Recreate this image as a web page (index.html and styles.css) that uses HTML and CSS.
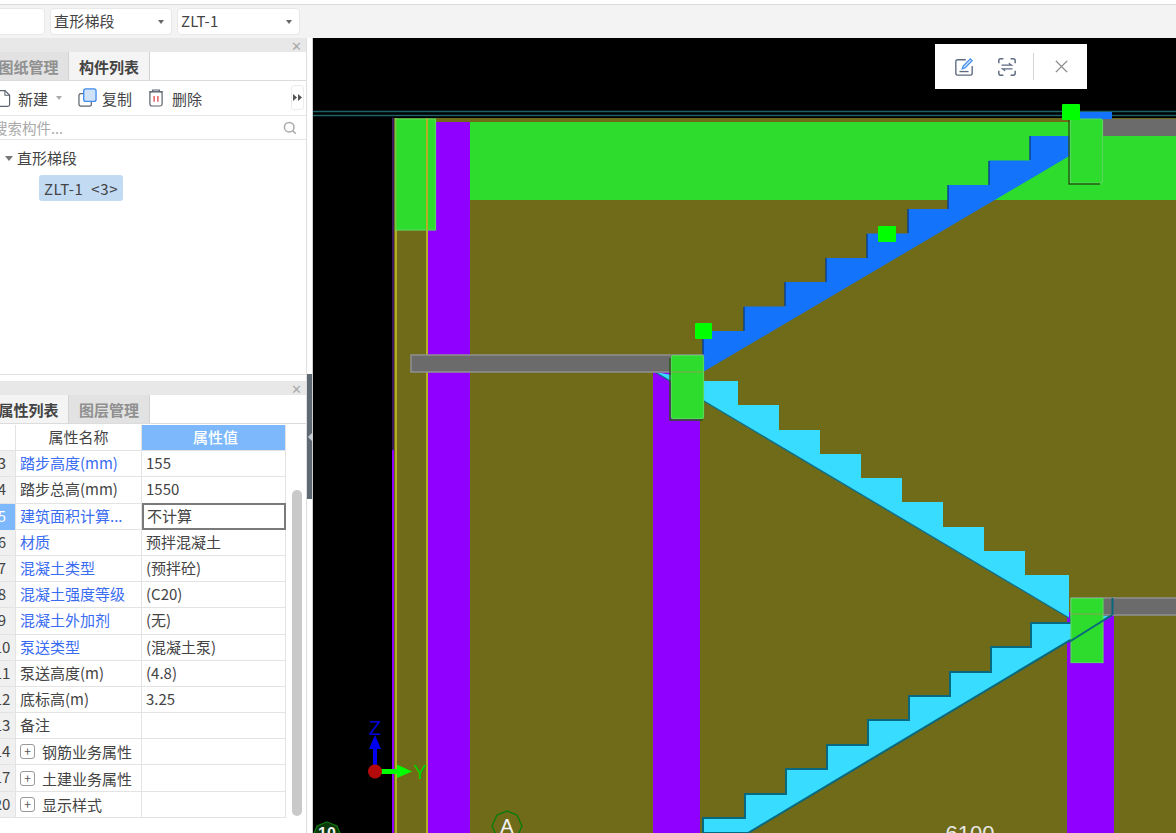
FILE: index.html
```html
<!DOCTYPE html>
<html lang="zh-CN">
<head>
<meta charset="utf-8">
<title>直形梯段</title>
<link rel="stylesheet" href="styles.css">
</head>
<body>
<div class="app">
  <header class="topbar">
    <div class="select select-a"><span class="caret"></span></div>
    <div class="select select-b"><span class="select-text">直形梯段</span><span class="caret"></span></div>
    <div class="select select-c"><span class="select-text">ZLT-1</span><span class="caret"></span></div>
  </header>
  <main class="main">
    <aside class="sidebar">
      <section class="panel panel-list">
        <div class="panel-head"><span class="panel-x">✕</span></div>
        <div class="tabs">
          <div class="tab">图纸管理</div>
          <div class="tab active">构件列表</div>
        </div>
        <div class="tools">
          <svg class="ic ic-doc" viewBox="0 0 16 20"><path d="M2.5 1.500h7l5 5v10a2 2 0 0 1-2 2h-10a2 2 0 0 1-2-2v-13a2 2 0 0 1 2-2z" fill="#fff" stroke="#5c6470" stroke-width="1.3"/><path d="M9.500 1.500v5h5" fill="none" stroke="#5c6470" stroke-width="1.1"/></svg>
          <span class="tool-label">新建</span>
          <span class="tool-caret"></span>
          <svg class="ic ic-copy" viewBox="0 0 20 20"><rect x="1" y="6" width="13" height="13" rx="2" fill="#fff" stroke="#5c6470" stroke-width="1.3"/><rect x="6" y="1" width="13" height="13" rx="2" fill="#cfe2f8" stroke="#3f8cf0" stroke-width="1.4"/></svg>
          <span class="tool-label">复制</span>
          <svg class="ic ic-trash" viewBox="0 0 17 20"><path d="M5 3V1.500h7V3M1 3.500h15" fill="none" stroke="#5c6470" stroke-width="1.3"/><rect x="2" y="3.500" width="13" height="15" rx="2" fill="#fff" stroke="#5c6470" stroke-width="1.3"/><path d="M6.500 8v6M10.500 8v6" stroke="#e0474c" stroke-width="1.4"/></svg>
          <span class="tool-label">删除</span>
          <span class="more"><svg class="more-ic" viewBox="0 0 9 7"><path d="M0 0l4 3.500L0 7zM5 0l4 3.500L5 7z" fill="#555"/></svg></span>
        </div>
        <div class="search">
          <span class="search-text">搜索构件...</span>
          <svg class="ic-search" viewBox="0 0 14 14"><circle cx="6.200" cy="6.200" r="4.800" fill="none" stroke="#a9a9a9" stroke-width="1.500"/><path d="M9.800 9.800l3 3" stroke="#a9a9a9" stroke-width="1.500"/></svg>
        </div>
        <div class="tree">
          <div class="tree-root"><span class="tree-caret"></span>直形梯段</div>
          <div class="tree-item">ZLT-1&nbsp;&nbsp;&lt;3&gt;</div>
        </div>
      </section>
      <section class="panel panel-props">
        <div class="panel-head"><span class="panel-x">✕</span></div>
        <div class="tabs">
          <div class="tab active">属性列表</div>
          <div class="tab">图层管理</div>
        </div>
        <div class="grid-wrap">
          <div class="grid">
            <div class="row head"><div class="idx plain"></div><div class="name">属性名称</div><div class="val">属性值</div></div>
            <div class="row"><div class="idx">3</div><div class="name link">踏步高度(mm)</div><div class="val">155</div></div>
            <div class="row"><div class="idx">4</div><div class="name">踏步总高(mm)</div><div class="val">1550</div></div>
            <div class="row current"><div class="idx">5</div><div class="name link">建筑面积计算...</div><div class="val">不计算</div></div>
            <div class="row"><div class="idx">6</div><div class="name link">材质</div><div class="val">预拌混凝土</div></div>
            <div class="row"><div class="idx">7</div><div class="name link">混凝土类型</div><div class="val">(预拌砼)</div></div>
            <div class="row"><div class="idx">8</div><div class="name link">混凝土强度等级</div><div class="val">(C20)</div></div>
            <div class="row"><div class="idx">9</div><div class="name link">混凝土外加剂</div><div class="val">(无)</div></div>
            <div class="row"><div class="idx">10</div><div class="name link">泵送类型</div><div class="val">(混凝土泵)</div></div>
            <div class="row"><div class="idx">11</div><div class="name">泵送高度(m)</div><div class="val">(4.8)</div></div>
            <div class="row"><div class="idx">12</div><div class="name">底标高(m)</div><div class="val">3.25</div></div>
            <div class="row"><div class="idx">13</div><div class="name">备注</div><div class="val"></div></div>
            <div class="row"><div class="idx">14</div><div class="name group"><span class="plus">+</span>钢筋业务属性</div><div class="val"></div></div>
            <div class="row"><div class="idx">17</div><div class="name group"><span class="plus">+</span>土建业务属性</div><div class="val"></div></div>
            <div class="row"><div class="idx">20</div><div class="name group"><span class="plus">+</span>显示样式</div><div class="val"></div></div>
          </div>
          <div class="scroll"><div class="thumb"></div></div>
        </div>
      </section>
    </aside>
    <div class="splitter"><span class="split-handle"><span class="split-arrow"></span></span></div>
    <div class="canvas">
      <svg class="drawing" viewBox="312 38 864 795" preserveAspectRatio="xMinYMin slice">
        <rect x="312" y="38" width="864" height="795" fill="#000"/>
        <rect x="394" y="118" width="782" height="715" fill="#6f6b18"/>
        <rect x="470" y="122" width="706" height="78" fill="#2ddc2d"/>
        <rect x="392" y="118" width="2" height="332" fill="#3a1a5c"/>
        <rect x="392" y="450" width="2" height="383" fill="#8f00ff"/>
        <rect x="428" y="122" width="42" height="711" fill="#8f00ff"/>
        <path d="M396 118V833M427 118V833" stroke="#b5ae22" stroke-width="2" fill="none"/>
        <path d="M312 111.500H1176M312 115.500H1176" stroke="#1f6069" stroke-width="1.400" fill="none"/>
        <rect x="653" y="372" width="47" height="461" fill="#8f00ff"/>
        <rect x="1067" y="612" width="47" height="221" fill="#8f00ff"/>
        <rect x="1080" y="112" width="32" height="8" fill="#1473fb"/>
        <polygon points="703,372 703,331 744,331 744,306.500 785,306.500 785,282 826,282 826,258 867,258 867,233.500 908,233.500 908,209 948,209 948,185 989,185 989,160.500 1030,160.500 1030,136 1071,136 1071,155" fill="#1473fb"/>
        <path d="M703 331V355M744 307V331M785 282V306M826 258V282M867 234V258M908 209V233M948 185V209M989 161V185M1030 136V160" stroke="#0b3f8c" stroke-width="1.400" fill="none"/>
        <polygon points="655,372 705,381 738,381 738,405 779,405 779,430 820,430 820,454 861,454 861,478 902,478 902,502 943,502 943,527 984,527 984,551 1025,551 1025,575 1069,575 1069,618" fill="#38dcff"/>
        <path d="M655 372L1069 618" stroke="#0e6f8a" stroke-width="1.400" fill="none"/>
        <polygon points="703,833 703,818 745,818 745,794 786,794 786,769 827,769 827,745 868,745 868,720 909,720 909,696 950,696 950,672 991,672 991,647 1031,647 1031,623 1071,623 1071,615 1112,615 748,833" fill="#38dcff" stroke="#08687f" stroke-width="2"/>
        <g fill="#6b6b6b" stroke="#909090" stroke-width="1.500">
          <rect x="411" y="355" width="292" height="17"/>
          <rect x="1071" y="598" width="110" height="17"/>
          <rect x="1103" y="119" width="80" height="17" stroke="none"/>
        </g>
        <g fill="#2ddc2d" stroke="#57d85a" stroke-width="1.200">
          <rect x="395.500" y="119" width="40" height="111"/>
          <rect x="671.500" y="355.500" width="32" height="63" rx="2"/>
          <rect x="1071" y="598.500" width="32" height="64"/>
          <rect x="1070.500" y="119" width="32" height="64" rx="2"/>
        </g>
        <path d="M670 358V420H703M1069 119V184H1100" stroke="#2a5a14" stroke-width="1.400" fill="none"/>
        <path d="M671 372H703M1071 614H1103" stroke="#8da052" stroke-width="1" fill="none"/>
        <path d="M1069 642L1112 615M1112.500 598V615" stroke="#08687f" stroke-width="2" fill="none"/>
        <path d="M427 119V230" stroke="#b5ae22" stroke-width="2" fill="none"/>
        <path d="M396 119V230" stroke="#b5ae22" stroke-width="1.500" opacity=".35" fill="none"/>
        <g fill="#00ff00">
          <rect x="1062" y="104" width="18" height="16" rx="1"/>
          <rect x="878" y="226" width="18" height="16" rx="1"/>
          <rect x="695" y="323" width="17" height="16" rx="1"/>
        </g>
        <path d="M312.500 38V833" stroke="#cfcfcf" stroke-width="1" fill="none"/>
        <rect x="373" y="747" width="4" height="20" fill="#0000f0"/>
        <polygon points="375,735 381,749 369,749" fill="#0000f0"/>
        <rect x="380" y="769" width="18" height="5" fill="#00ff00"/>
        <polygon points="412,771.500 397,764.500 397,778" fill="#00ff00"/>
        <circle cx="375" cy="771.500" r="7" fill="#b50a0a"/>
        <text class="axis axis-z" x="375" y="735" text-anchor="middle">Z</text>
        <text class="axis axis-y" x="420" y="779" text-anchor="middle">Y</text>
        <polygon points="507,811 517,815 522,826 517,837 507,841 497,837 492,826 497,815" fill="none" stroke="#0d7a0d" stroke-width="1.400"/>
        <text class="grid-label" x="507" y="833" text-anchor="middle">A</text>
        <polygon points="327,822 337,826 341,836 313,836 317,826" fill="#0a3a0a" stroke="#0d7a0d" stroke-width="1.200"/>
        <text class="grid-label small" x="327" y="839" text-anchor="middle">10</text>
        <text class="grid-label dim" x="970" y="841" text-anchor="middle">6100</text>
      </svg>
      <div class="float-bar">
        <svg class="fb-ic" viewBox="0 0 22 22"><path d="M13 3H4a2 2 0 0 0-2 2v13a2 2 0 0 0 2 2h14a2 2 0 0 0 2-2V10" fill="none" stroke="#5f6b80" stroke-width="1.500"/><path d="M6 16h10" stroke="#5f6b80" stroke-width="1.500"/><path d="M9 13l1-3 8-8 2 2-8 8z" fill="#cfe2f8" stroke="#3f8cf0" stroke-width="1.300"/></svg>
        <svg class="fb-ic" viewBox="0 0 22 22"><path d="M2 7V4a2 2 0 0 1 2-2h3M15 2h3a2 2 0 0 1 2 2v3M20 15v3a2 2 0 0 1-2 2h-3M7 20H4a2 2 0 0 1-2-2v-3" fill="none" stroke="#5f6b80" stroke-width="1.600"/><path d="M5 9h11l-3-2M17 13H6l3 2" fill="none" stroke="#5f6b80" stroke-width="1.300"/></svg>
        <span class="fb-sep"></span>
        <svg class="fb-ic fb-close" viewBox="0 0 16 16"><path d="M2 2l12 12M14 2L2 14" stroke="#8a8a8a" stroke-width="1.500" fill="none"/></svg>
      </div>
    </div>
  </main>
</div>
</body>
</html>
```
FILE: styles.css
```css
* { box-sizing: border-box; }
html, body { margin: 0; height: 100%; overflow: hidden; }
body {
  font-family: "Noto Sans CJK SC", "Noto Sans", sans-serif;
  font-size: 15px;
  color: #444;
  background: #fff;
}
.app { width: 1176px; height: 833px; display: flex; flex-direction: column; overflow: hidden; }

.topbar {
  height: 34px;
  flex: none;
  margin-top: 4px;
  margin-left: -10px;
  border-top: 1px solid #dcdcdc;
  background: #f3f3f3;
  display: flex;
  gap: 5px;
  padding-top: 3px;
}
.select {
  height: 27px;
  background: #fff;
  border: 1px solid #e8e8e8;
  border-radius: 4px;
  display: flex;
  align-items: center;
  justify-content: space-between;
  padding: 0 7px 0 3px;
  line-height: 1;
}
.select-text { margin-top: -3px; letter-spacing: .2px; }
.select-a { width: 55px; }
.select-b { width: 122px; }
.select-c { width: 123px; }
.caret {
  width: 0; height: 0;
  border-left: 3.5px solid transparent;
  border-right: 3.5px solid transparent;
  border-top: 4px solid #666;
}

.main { flex: 1; display: flex; min-height: 0; }
.sidebar { width: 307px; flex: none; display: flex; flex-direction: column; border-right: 1px solid #dedede; overflow: hidden; }
.splitter { width: 5px; flex: none; background: #fff; padding-top: 336px; }
.split-handle { display: flex; align-items: center; justify-content: center; height: 125px; background: #5f6973; }
.split-arrow {
  width: 0; height: 0;
  border-top: 4px solid transparent;
  border-bottom: 4px solid transparent;
  border-right: 4px solid #c9ced3;
}

.panel { display: flex; flex-direction: column; margin-left: -11px; }
.panel-list { height: 337px; border-bottom: 1px solid #e2e2e2; }
.panel-props { flex: 1; padding-top: 6px; min-height: 0; }
.panel-head {
  height: 14px; flex: none;
  background: #e8e8e8;
  display: flex; justify-content: flex-end; align-items: center;
  padding-right: 4px;
}
.panel-x { font-size: 13px; line-height: 1; color: #aaa; }

.tabs { height: 29px; flex: none; display: flex; border-bottom: 1px solid #dcdcdc; background: #fff; }
.tab {
  width: 80px;
  display: flex; align-items: center; justify-content: center;
  background: #e2e2e2; color: #909090;
  font-weight: 700; font-size: 15px;
  border-right: 1px solid #cfd3d6;
}
.tab.active { background: #f4f4f4; color: #444; }
.tab:nth-child(2) { width: 81px; }

.tools {
  height: 35px; flex: none;
  display: flex; align-items: center;
  border-bottom: 1px solid #e8e8e8;
  padding-left: 9px;
  position: relative;
}
.ic { flex: none; }
.ic-doc { width: 15px; height: 19px; margin-left: -2px; }
.ic-copy { width: 19px; height: 19px; margin-top: -2px; }
.ic-trash { width: 16px; height: 20px; }
.tool-label { line-height: 1; }
.ic-doc + .tool-label { margin-left: 7px; }
.tool-caret {
  margin: 0 16px 0 8px;
  border-left: 3.5px solid transparent;
  border-right: 3.5px solid transparent;
  border-top: 4px solid #aaa;
}
.ic-copy + .tool-label { margin-left: 5px; margin-right: 16px; }
.ic-trash + .tool-label { margin-left: 8px; }
.more {
  position: absolute; left: 302px; top: 4px;
  width: 13px; height: 25px;
  border: 1px solid #ececec; border-radius: 3px;
  display: flex; align-items: center; justify-content: center;
}
.more-ic { width: 9px; height: 7px; }

.search {
  height: 24px; flex: none;
  display: flex; align-items: center; justify-content: space-between;
  padding: 0 9px 0 4px;
  border-bottom: 1px solid #e4e4e4;
  color: #aaa;
  font-size: 14.5px;
}
.ic-search { width: 14px; height: 14px; }

.tree { flex: 1; padding: 5px 0 0 16px; }
.tree-root { height: 24px; display: flex; align-items: center; line-height: 1; }
.tree-caret {
  width: 0; height: 0; margin: 2px 4px 0 0;
  border-left: 4px solid transparent;
  border-right: 4px solid transparent;
  border-top: 5px solid #777;
}
.tree-item {
  width: 84px; height: 26px; margin: 6px 0 0 34px;
  background: #c2daf2; border-radius: 3px;
  display: flex; align-items: center; justify-content: center;
  line-height: 1; white-space: nowrap; letter-spacing: .6px;
}

.grid-wrap { flex: 1; display: flex; min-height: 0; background: #fff; padding-top: 1px; }
.grid { width: 297px; flex: none; }
.row {
  display: grid;
  grid-template-columns: 27px 126px 144px;
  height: 26.2px;
  border-bottom: 1px solid #e3e3e3;
  line-height: 23px;
}
.idx { background: #f0f0f0; text-align: center; border-right: 1px solid #e3e3e3; }
.idx.plain { background: #fff; }
.name { padding-left: 4px; border-right: 1px solid #e3e3e3; white-space: nowrap; overflow: hidden; }
.val { padding-left: 4px; border-right: 1px solid #e3e3e3; }
.link { color: #3a6cf2; }
.head .name { text-align: center; padding-left: 0; }
.head .val { background: #7cb8fb; color: #fff; text-align: center; font-weight: 500; }
.current .idx { background: #7cb8fb; color: #fff; }
.current .val { border: 2px solid #7a7a7a; line-height: 21px; padding-left: 3px; margin-top: -1px; height: 27px; }
.group { display: flex; align-items: center; }
.plus {
  width: 15px; height: 15px; flex: none;
  border: 1px solid #999; border-radius: 3px;
  margin-right: 7px;
  font-size: 12px; line-height: 12px; text-align: center; color: #555;
}
.scroll { flex: 1; padding: 65px 0 0 6px; }
.thumb { width: 10px; height: 326px; border-radius: 5px; background: #c9c9c9; }

.canvas { flex: 1; position: relative; min-width: 0; background: #000; overflow: hidden; }
.drawing { display: block; width: 864px; height: 795px; }
.axis { font-family: "Liberation Sans", sans-serif; font-size: 20px; }
.axis-z { fill: #0000d8; }
.axis-y { fill: #00d000; }
.grid-label { font-family: "Liberation Sans", sans-serif; font-size: 20px; fill: #f2f2f2; }
.grid-label.small { font-size: 16px; font-weight: 700; }
.grid-label.dim { font-size: 22px; fill: #e8e8e8; }
.float-bar {
  position: absolute; left: 623px; top: 6px;
  width: 152px; height: 45px;
  background: #fff;
  display: flex; align-items: center;
  padding-left: 19px;
}
.fb-ic { width: 20px; height: 20px; flex: none; }
.fb-ic + .fb-ic { margin-left: 23px; }
.fb-sep { width: 1px; height: 27px; background: #d5d5d5; margin: 0 20px 0 16px; }
.fb-close { width: 15px; height: 15px; }
```
